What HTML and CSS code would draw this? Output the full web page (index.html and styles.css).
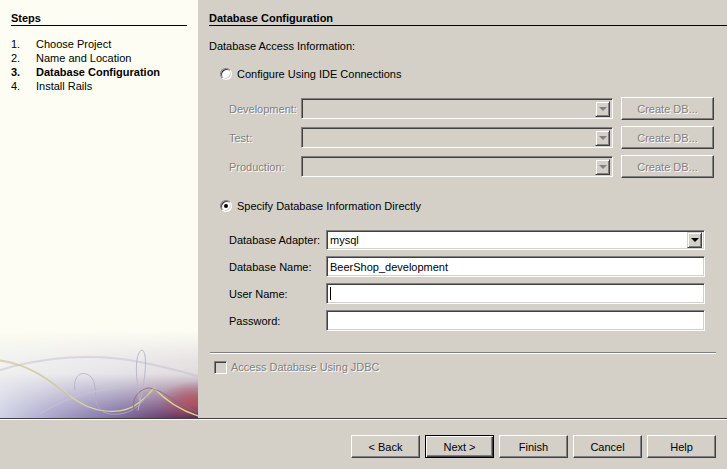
FILE: index.html
```html
<!DOCTYPE html>
<html>
<head>
<meta charset="utf-8">
<link rel="stylesheet" href="styles.css">
</head>
<body>
<div class="wizard">
  <div class="steps-pane">
    <div class="pane-title steps-title">Steps</div>
    <div class="step-list">
      <span>1.</span><span>Choose Project</span>
      <span>2.</span><span>Name and Location</span>
      <span class="cur">3.</span><span class="cur">Database Configuration</span>
      <span>4.</span><span>Install Rails</span>
    </div>
    <svg class="art" width="198" height="88" viewBox="0 0 198 88">
      <defs>
        <linearGradient id="hz" x1="0" y1="0" x2="1" y2="0">
          <stop offset="0" stop-color="#cfd3e6"/>
          <stop offset="0.35" stop-color="#9c94c0"/>
          <stop offset="0.6" stop-color="#7a6aa0"/>
          <stop offset="0.85" stop-color="#6a3a6a"/>
          <stop offset="1" stop-color="#4e1d4a"/>
        </linearGradient>
        <linearGradient id="vt" x1="0" y1="0" x2="0" y2="1">
          <stop offset="0" stop-color="#fff" stop-opacity="0"/>
          <stop offset="0.5" stop-color="#fff" stop-opacity="0.12"/>
          <stop offset="1" stop-color="#fff" stop-opacity="1"/>
        </linearGradient>
        <mask id="m"><rect width="198" height="88" fill="url(#vt)"/></mask>
        <radialGradient id="red" cx="0.95" cy="0.72" r="0.35">
          <stop offset="0" stop-color="#c0505a" stop-opacity="0.8"/>
          <stop offset="1" stop-color="#c0505a" stop-opacity="0"/>
        </radialGradient>
        <linearGradient id="top" x1="0" y1="0" x2="0" y2="1">
          <stop offset="0" stop-color="#fdfdf3"/>
          <stop offset="0.3" stop-color="#f6f6f2"/>
          <stop offset="1" stop-color="#eeeef0"/>
        </linearGradient>
      </defs>
      <rect width="198" height="88" fill="url(#top)"/>
      <rect width="198" height="88" fill="url(#hz)" mask="url(#m)"/>
      <rect x="100" y="30" width="98" height="58" fill="url(#red)"/>
      <g fill="none" stroke-linecap="round">
        <path d="M0 40 C40 28 90 22 140 32 C170 38 190 44 198 46" stroke="#c0c0cc" stroke-width="2" opacity="0.5"/>
        <path d="M0 30 C30 34 50 50 70 66 C90 82 120 88 140 72 C150 64 152 60 154 58 C165 70 180 80 198 86" stroke="#dcd890" stroke-width="1.2"/>
        <path d="M0 31 C30 35 50 51 70 67" stroke="#b8b0a8" stroke-width="0.6"/>
        <path d="M140 72 C134 40 136 22 142 20 C148 22 146 50 138 80" stroke="#bcb8c8" stroke-width="1"/>
        <path d="M75 60 C72 42 86 40 92 48 C100 60 88 80 110 84 C130 86 140 76 148 64" stroke="#b4aec0" stroke-width="0.8"/>
        <path d="M135 82 C130 70 138 60 148 58 C160 58 180 76 198 82" stroke="#8a6a70" stroke-width="0.8"/>
        <path d="M40 84 C60 70 90 60 120 58" stroke="#c8c8d4" stroke-width="1" opacity="0.6"/>
      </g>
    </svg>
  </div>
  <div class="main-pane">
    <div class="pane-title main-title">Database Configuration</div>
    <div class="section-label">Database Access Information:</div>
    <label class="radio-row top-radio"><span class="radio"></span>Configure Using IDE Connections</label>
    <div class="conn-rows">
      <div class="conn-row">
        <span class="dis-label">Development:</span>
        <div class="combo disabled"><span class="arrow"><i></i></span></div>
        <button class="btn create">Create DB...</button>
      </div>
      <div class="conn-row">
        <span class="dis-label">Test:</span>
        <div class="combo disabled"><span class="arrow"><i></i></span></div>
        <button class="btn create">Create DB...</button>
      </div>
      <div class="conn-row">
        <span class="dis-label">Production:</span>
        <div class="combo disabled"><span class="arrow"><i></i></span></div>
        <button class="btn create">Create DB...</button>
      </div>
    </div>
    <label class="radio-row direct-radio"><span class="radio checked"></span>Specify Database Information Directly</label>
    <div class="form-rows">
      <div class="form-row">
        <span>Database Adapter:</span>
        <div class="combo"><span class="value">mysql</span><span class="arrow"><i></i></span></div>
      </div>
      <div class="form-row">
        <span>Database Name:</span>
        <div class="field"><span class="value">BeerShop_development</span></div>
      </div>
      <div class="form-row">
        <span>User Name:</span>
        <div class="field"><span class="caret"></span></div>
      </div>
      <div class="form-row">
        <span>Password:</span>
        <div class="field"></div>
      </div>
    </div>
    <div class="separator"></div>
    <label class="check-row"><span class="checkbox"></span><span class="dis-label">Access Database Using JDBC</span></label>
  </div>
</div>
<div class="footer">
  <button class="btn">&lt; Back</button>
  <button class="btn default">Next &gt;</button>
  <button class="btn">Finish</button>
  <button class="btn">Cancel</button>
  <button class="btn">Help</button>
</div>
</body>
</html>
```

FILE: styles.css
```css
* { box-sizing: border-box; }
html, body { margin: 0; padding: 0; }
body {
  width: 727px;
  height: 469px;
  overflow: hidden;
  background: #d4d0c8;
  font-family: "Liberation Sans", Arial, sans-serif;
  font-size: 11px;
  line-height: 14px;
  color: #000;
}
.wizard { display: flex; height: 418px; }
.steps-pane {
  width: 198px;
  background: #fdfdf3;
  display: flex;
  flex-direction: column;
  padding-top: 11px;
}
.pane-title {
  font-weight: bold;
  height: 15px;
  border-bottom: 1px solid #000;
}
.steps-title { margin: 0 11px; }
.step-list {
  margin: 11px 0 0 11px;
  display: grid;
  grid-template-columns: 25px auto;
}
.step-list .cur { font-weight: bold; }
.art { margin-top: auto; display: block; }

.main-pane {
  flex: 1;
  padding: 11px 0 0 11px;
  display: flex;
  flex-direction: column;
}
.section-label { margin-top: 13px; }
.radio-row {
  display: flex;
  align-items: center;
  gap: 5px;
  height: 14px;
  margin-left: 11px;
}
.top-radio { margin-top: 14px; }
.direct-radio { margin-top: 21px; }
.radio {
  width: 12px; height: 12px;
  border-radius: 50%;
  background: #fff;
  border: 1px solid;
  border-color: #808080 #fff #fff #808080;
  box-shadow: inset 1px 1px 0 #404040, inset -1px -1px 0 #d4d0c8;
  position: relative;
}
.radio.checked::after {
  content: "";
  position: absolute;
  left: 3px; top: 3px;
  width: 4px; height: 4px;
  border-radius: 50%;
  background: #000;
}
.conn-rows {
  margin-top: 16px;
  margin-left: 20px;
  display: flex;
  flex-direction: column;
  gap: 6px;
}
.conn-row {
  display: grid;
  grid-template-columns: 72px 312px 93px;
  align-items: center;
  height: 23px;
}
.conn-row .btn { margin-left: 8px; }
.dis-label { color: #808080; text-shadow: 1px 1px 0 #fff; }
.combo, .field {
  height: 20px;
  background: #fff;
  border: 1px solid;
  border-color: #808080 #fff #fff #808080;
  box-shadow: inset 1px 1px 0 #404040, inset -1px -1px 0 #d4d0c8;
  display: flex;
  align-items: center;
  padding: 2px;
}
.combo.disabled { background: #d4d0c8; height: 21px; }
.value { padding-left: 1px; flex: 1; }
.arrow {
  margin-left: auto;
  width: 15px;
  height: 16px;
  background: #d4d0c8;
  border: 1px solid;
  border-color: #d4d0c8 #404040 #404040 #d4d0c8;
  box-shadow: inset 1px 1px 0 #fff, inset -1px -1px 0 #808080;
  display: flex;
  align-items: center;
  justify-content: center;
}
.arrow i {
  width: 0; height: 0;
  border-left: 4px solid transparent;
  border-right: 4px solid transparent;
  border-top: 4px solid #000;
  margin-top: 1px;
}
.combo.disabled .arrow i { border-top-color: #808080; }
.form-rows {
  margin-top: 16px;
  margin-left: 20px;
  display: flex;
  flex-direction: column;
  gap: 6px;
}
.form-row {
  display: grid;
  grid-template-columns: 97px 379px;
  align-items: center;
  height: 21px;
}
.field { height: 21px; }
.caret { width: 1px; height: 13px; background: #000; margin-left: 1px; }
.separator {
  margin: 21px 11px 0 1px;
  border-top: 1px solid #808080;
  border-bottom: 1px solid #fff;
}
.check-row {
  display: flex;
  align-items: center;
  gap: 4px;
  height: 14px;
  margin-top: 6px;
  margin-left: 5px;
}
.checkbox {
  width: 13px; height: 13px;
  border: 1px solid;
  border-color: #808080 #fff #fff #808080;
  box-shadow: inset 1px 1px 0 #404040, inset -1px -1px 0 #d4d0c8;
  background: #d4d0c8;
}
.btn {
  font-family: inherit;
  font-size: 11px;
  color: #000;
  background: #d4d0c8;
  width: 69px;
  height: 23px;
  padding: 0;
  border: 1px solid;
  border-color: #fff #404040 #404040 #fff;
  box-shadow: inset -1px -1px 0 #808080, inset 1px 1px 0 #d4d0c8;
}
.btn.create { width: 93px; color: #808080; text-shadow: 1px 1px 0 #fff; }
.btn.default {
  border: 1px solid #000;
  box-shadow: inset 1px 1px 0 #fff, inset -1px -1px 0 #404040, inset -2px -2px 0 #808080;
}
.footer {
  border-top: 1px solid #404040;
  box-shadow: inset 0 1px 0 #fff;
  height: 51px;
  display: flex;
  justify-content: flex-end;
  gap: 5px;
  padding: 16px 11px 0 0;
}
```
